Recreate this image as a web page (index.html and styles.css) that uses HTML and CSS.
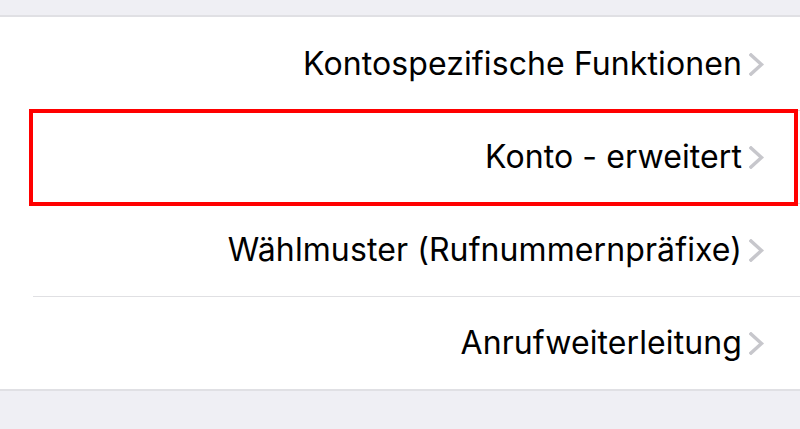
FILE: index.html
```html
<!DOCTYPE html>
<html lang="de">
<head>
  <meta charset="UTF-8">
  <meta name="viewport" content="width=device-width, initial-scale=1.0">
  <title>Konto</title>
  <link rel="stylesheet" href="styles.css">
</head>
<body>
  <!-- Settings group -->
  <ul class="group">
    <li class="row">
      <span class="label">Kontospezifische Funktionen</span>
      <svg class="chevron" viewBox="0 0 15 23"><path d="M2 2 L12.5 11.5 L2 21"/></svg>
    </li>
    <li class="row marked">
      <span class="label">Konto - erweitert</span>
      <svg class="chevron" viewBox="0 0 15 23"><path d="M2 2 L12.5 11.5 L2 21"/></svg>
    </li>
    <li class="row">
      <span class="label">Wählmuster (Rufnummernpräfixe)</span>
      <svg class="chevron" viewBox="0 0 15 23"><path d="M2 2 L12.5 11.5 L2 21"/></svg>
    </li>
    <li class="row">
      <span class="label">Anrufweiterleitung</span>
      <svg class="chevron" viewBox="0 0 15 23"><path d="M2 2 L12.5 11.5 L2 21"/></svg>
    </li>
  </ul>
</body>
</html>
```

FILE: styles.css
```css
body {
  margin: 0;
  padding-top: 15px;
  background-color: #efeff4;
  font-family: Inter, "Noto Sans", sans-serif;
  color: #000;
}

.group {
  list-style: none;
  margin: 0;
  padding: 0;
  background-color: #fff;
  border-top: 2px solid #e0e0e4;
  border-bottom: 2px solid #e0e0e4;
}

.row {
  position: relative;
  height: 93px;
  display: flex;
  align-items: center;
  justify-content: flex-end;
  padding-right: 36px;
}

.row + .row::before {
  content: "";
  position: absolute;
  top: 0;
  left: 33px;
  right: 0;
  border-top: 1px solid #e0e0e3;
}

.label {
  font-size: 32px;
  letter-spacing: 0.1px;
  white-space: nowrap;
}

.chevron {
  width: 15px;
  height: 23px;
  margin-left: 7px;
  margin-bottom: -1px;
  flex-shrink: 0;
}

.chevron path {
  fill: none;
  stroke: #c7c7cc;
  stroke-width: 3.5;
  stroke-linecap: square;
}

/* red annotation frame */
.marked::after {
  content: "";
  position: absolute;
  top: -1px;
  bottom: -3px;
  left: 29px;
  right: 2px;
  border: 4px solid #ff0000;
  z-index: 1;
}
```
